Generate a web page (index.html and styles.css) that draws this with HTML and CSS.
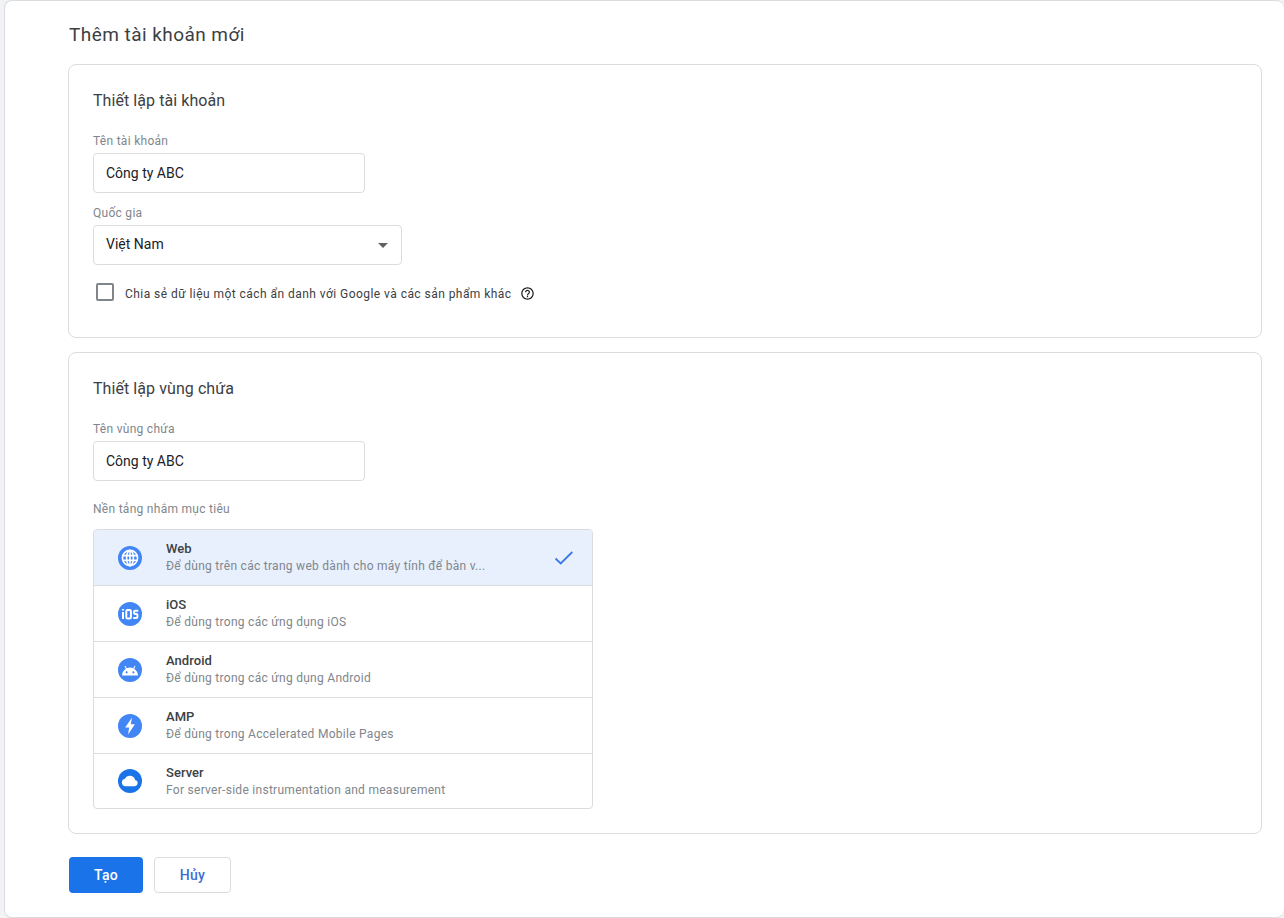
FILE: index.html
```html
<!DOCTYPE html>
<html lang="vi">
<head>
<meta charset="utf-8">
<title>Thêm tài khoản mới</title>
<link rel="stylesheet" href="styles.css">
</head>
<body>
<main class="panel">
  <h1 class="page-title">Thêm tài khoản mới</h1>

  <section class="card card-account">
    <h2 class="card-title">Thiết lập tài khoản</h2>
    <label class="field-label first">Tên tài khoản</label>
    <div class="input">Công ty ABC</div>
    <label class="field-label">Quốc gia</label>
    <div class="input select"><span class="select-value">Việt Nam</span><span class="caret"></span></div>
    <div class="check-row">
      <span class="checkbox"></span>
      <span class="check-text">Chia sẻ dữ liệu một cách ẩn danh với Google và các sản phẩm khác</span>
      <svg class="help" viewBox="0 0 24 24" width="15" height="15"><path fill="#202124" d="M11 18h2v-2h-2v2zm1-16C6.48 2 2 6.48 2 12s4.48 10 10 10 10-4.48 10-10S17.52 2 12 2zm0 18c-4.41 0-8-3.59-8-8s3.59-8 8-8 8 3.59 8 8-3.59 8-8 8zm0-14c-2.21 0-4 1.79-4 4h2c0-1.1.9-2 2-2s2 .9 2 2c0 2-3 1.75-3 5h2c0-2.25 3-2.5 3-5 0-2.21-1.79-4-4-4z"/></svg>
    </div>
  </section>

  <section class="card card-container">
    <h2 class="card-title">Thiết lập vùng chứa</h2>
    <label class="field-label first">Tên vùng chứa</label>
    <div class="input">Công ty ABC</div>
    <label class="field-label target">Nền tảng nhắm mục tiêu</label>
    <ul class="platforms">
      <li class="platform selected">
        <svg class="p-icon" viewBox="0 0 24 24" width="24" height="24"><circle cx="12" cy="12" r="12" fill="#4285f4"/><g fill="none" stroke="#fff" stroke-width="1.6"><circle cx="12" cy="12" r="7.6"/><ellipse cx="12" cy="12" rx="3.4" ry="7.6"/><path d="M12 4.400v15.200M4.800 9.600h14.400M4.800 14.400h14.400"/></g></svg>
        <div class="p-text"><div class="p-name">Web</div><div class="p-desc">Để dùng trên các trang web dành cho máy tính để bàn v...</div></div>
        <svg class="p-check" viewBox="0 0 20 16" width="20" height="16"><path fill="none" stroke="#3b78e7" stroke-width="1.8" d="M1.500 8.500l5.200 5L18.300 2"/></svg>
      </li>
      <li class="platform">
        <svg class="p-icon" viewBox="0 0 24 24" width="24" height="24"><circle cx="12" cy="12" r="12" fill="#4285f4"/><g fill="none" stroke="#fff" stroke-width="2"><path d="M5 10v7M5 7v1.500"/><rect x="8.300" y="8" width="4.600" height="8.500" rx="1.200"/><path d="M20.300 8.700h-3.200a1 1 0 0 0-1 1v1.400a1 1 0 0 0 1 1h1.300a1 1 0 0 1 1 1v1.900a1 1 0 0 1-1 1h-3.200"/></g></svg>
        <div class="p-text"><div class="p-name">iOS</div><div class="p-desc">Để dùng trong các ứng dụng iOS</div></div>
      </li>
      <li class="platform">
        <svg class="p-icon" viewBox="0 0 24 24" width="24" height="24"><circle cx="12" cy="12" r="12" fill="#4285f4"/><path fill="#fff" d="M4 17.500c.2-3.100 1.700-5.500 3.900-6.800L6.500 8.300l.9-.5 1.400 2.400c2.100-.8 4.300-.8 6.400 0l1.400-2.400.9.5-1.400 2.400c2.200 1.300 3.700 3.700 3.900 6.800z"/><circle cx="8.600" cy="14.300" r="1.100" fill="#4285f4"/><circle cx="15.400" cy="14.300" r="1.100" fill="#4285f4"/></svg>
        <div class="p-text"><div class="p-name">Android</div><div class="p-desc">Để dùng trong các ứng dụng Android</div></div>
      </li>
      <li class="platform">
        <svg class="p-icon" viewBox="0 0 24 24" width="24" height="24"><circle cx="12" cy="12" r="12" fill="#4285f4"/><path fill="#fff" d="M14 3.600 7.200 13.500h4l-1.200 7 6.900-10.200h-4.100z"/></svg>
        <div class="p-text"><div class="p-name">AMP</div><div class="p-desc">Để dùng trong Accelerated Mobile Pages</div></div>
      </li>
      <li class="platform">
        <svg class="p-icon" viewBox="0 0 24 24" width="24" height="24"><circle cx="12" cy="12" r="12" fill="#1a73e8"/><path fill="#fff" d="M7.500 17.200a3.700 3.700 0 0 1-.5-7.350 5.400 5.400 0 0 1 10.100 1.050 3.200 3.200 0 0 1-.2 6.300z"/></svg>
        <div class="p-text"><div class="p-name">Server</div><div class="p-desc">For server-side instrumentation and measurement</div></div>
      </li>
    </ul>
  </section>

  <div class="actions">
    <button class="btn btn-primary" type="button">Tạo</button>
    <button class="btn btn-secondary" type="button">Hủy</button>
  </div>
</main>
</body>
</html>
```

FILE: styles.css
```css
* { box-sizing: border-box; }
html, body { margin: 0; height: 100%; }
body {
  background: #f1f3f4;
  font-family: Roboto, "Noto Sans", sans-serif;
  color: #3c4043;
  overflow: hidden;
}
.panel {
  margin-left: 4px;
  height: 918px;
  padding: 0 22px 0 63px;
  background: #fff;
  border: 1px solid #dadce0;
  border-right: 0;
  border-radius: 8px;
}
.page-title {
  margin: 0;
  padding: 22px 0 0 1px;
  height: 63px;
  font-size: 19px;
  line-height: 24px;
  font-weight: 400;
  color: #3c4043;
  letter-spacing: .45px;
}
.card {
  border: 1px solid #dadce0;
  border-radius: 8px;
  padding: 24px 24px 0;
  background: #fff;
}
.card-account { height: 274px; margin-bottom: 14px; }
.card-container { height: 482px; }
.card-title {
  margin: 0;
  padding-top: 1px;
  font-size: 16px;
  line-height: 22px;
  font-weight: 400;
  color: #3c4043;
  letter-spacing: .07px;
}
.field-label {
  display: block;
  height: 18px;
  margin: 11px 0 3px;
  font-size: 12px;
  line-height: 18px;
  color: #80868b;
  letter-spacing: .28px;
}
.field-label.first { margin-top: 20px; margin-bottom: 3px; }
.field-label.target { margin-top: 19px; margin-bottom: 11px; }
.input {
  display: flex;
  align-items: center;
  width: 272px;
  height: 40px;
  padding: 0 12px;
  border: 1px solid #dadce0;
  border-radius: 4px;
  font-size: 14px;
  color: #202124;
}
.select {
  width: 309px;
  justify-content: space-between;
}
.select-value { margin-bottom: 2px; }
.caret {
  width: 0;
  height: 0;
  margin-right: 1px;
  border-left: 5px solid transparent;
  border-right: 5px solid transparent;
  border-top: 5px solid #5f6368;
}
.check-row {
  display: flex;
  align-items: flex-start;
  height: 18px;
  margin-top: 18px;
  padding-left: 3px;
}
.checkbox {
  width: 18px;
  height: 18px;
  border: 2px solid #80868b;
  border-radius: 2px;
}
.check-text {
  margin: 3px 0 0 11px;
  font-size: 12px;
  line-height: 16px;
  color: #3c4043;
  letter-spacing: .45px;
}
.help { margin: 3px 0 0 8px; }
.platforms {
  list-style: none;
  margin: 0;
  padding: 0;
  width: 500px;
  border: 1px solid #dadce0;
  border-radius: 4px;
  overflow: hidden;
}
.platform {
  display: flex;
  align-items: center;
  height: 56px;
  padding-left: 24px;
  border-bottom: 1px solid #dadce0;
}
.platform:last-child { height: 54px; border-bottom: 0; }
.platform.selected { background: #e8f0fe; }
.p-icon { flex: none; }
.p-text {
  align-self: flex-start;
  flex: 1;
  margin-left: 24px;
  padding-top: 11px;
}
.p-name {
  font-size: 13px;
  line-height: 16px;
  font-weight: 500;
  color: #3c4043;
  letter-spacing: .05px;
}
.p-desc {
  margin-top: 1px;
  font-size: 12px;
  line-height: 16px;
  color: #80868b;
  letter-spacing: .28px;
}
.p-check { flex: none; margin-right: 18px; }
.actions {
  display: flex;
  gap: 11px;
  margin-top: 23px;
  padding-left: 1px;
}
.btn {
  height: 36px;
  border-radius: 4px;
  font-family: inherit;
  font-size: 14px;
  font-weight: 500;
  letter-spacing: .35px;
  padding: 0;
}
.btn-primary {
  width: 74px;
  background: #1a73e8;
  border: 0;
  color: #fff;
}
.btn-secondary {
  width: 77px;
  background: #fff;
  border: 1px solid #dadce0;
  color: #3b6fd4;
}
```
